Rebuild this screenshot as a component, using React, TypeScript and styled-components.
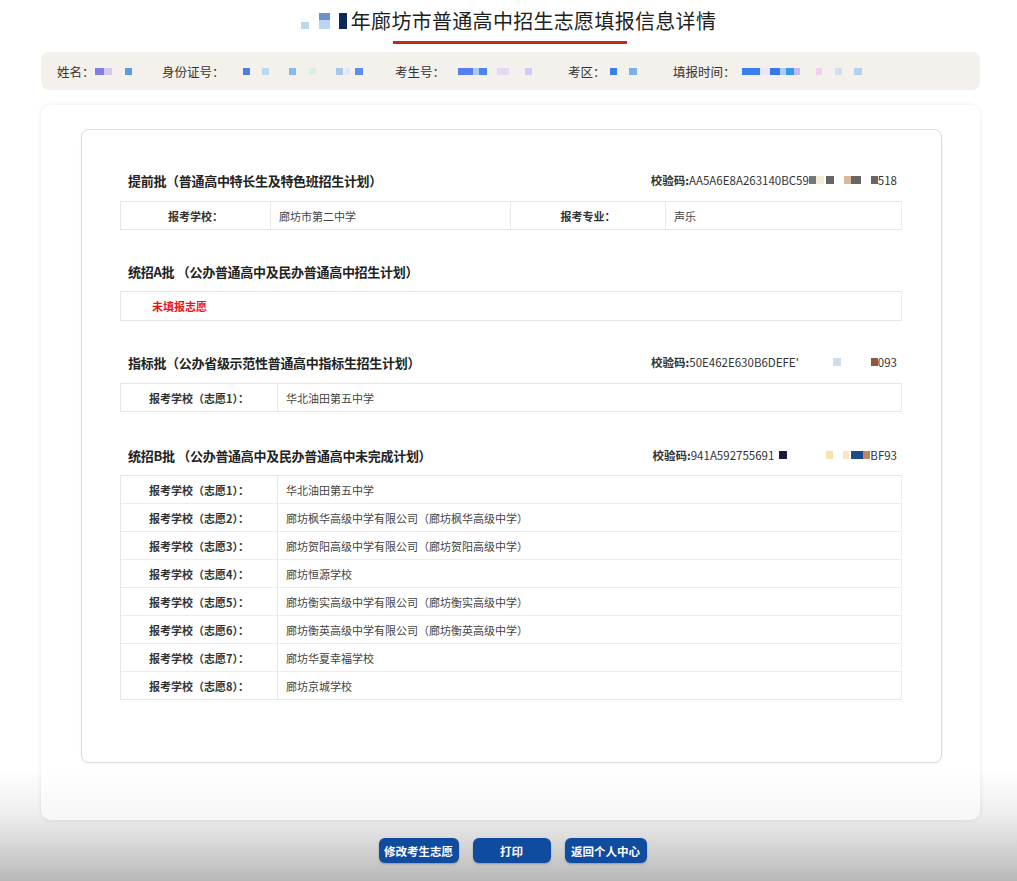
import React from "react";
import styled, { createGlobalStyle } from "styled-components";

const GlobalStyle = createGlobalStyle`
  html, body { margin: 0; padding: 0; }
  body {
    font-family: "Noto Sans CJK SC", "Noto Sans", sans-serif;
    background: linear-gradient(to bottom, #ffffff 0px, #ffffff 770px, #eeeeee 815px, #d2d2d2 850px, #b8b8b8 881px);
    min-height: 881px;
    color: #333;
  }
`;

const Page = styled.div`
  width: 1017px;
  min-height: 881px;
  display: flex;
  flex-direction: column;
`;

const TitleWrap = styled.div`
  display: flex;
  flex-direction: column;
  align-items: center;
  padding-top: 7px;
`;

const Title = styled.h1`
  margin: 0;
  display: flex;
  align-items: center;
  font-size: 20px;
  letter-spacing: 0.3px;
  font-weight: 400;
  color: #1e1e1e;
  line-height: 28px;
`;

const Underline = styled.div`
  width: 234px;
  height: 3px;
  background: #c8281c;
  margin-top: 6px;
  margin-left: 3px;
`;

const Sq = styled.span<{ $c: string; $w?: number; $h?: number; $ml?: number; $top?: string }>`
  display: inline-block;
  width: ${(p) => p.$w ?? 7}px;
  height: ${(p) => p.$h ?? 7}px;
  margin-left: ${(p) => p.$ml ?? 0}px;
  background: ${(p) => (p.$top ? `linear-gradient(to bottom, ${p.$top} 0 45%, ${p.$c} 45% 100%)` : p.$c)};
  flex: none;
`;

const Mask = styled.span<{ $ml?: number; $align?: string }>`
  display: inline-flex;
  align-items: ${(p) => p.$align ?? "center"};
  margin-left: ${(p) => p.$ml ?? 0}px;
`;

const TitleText = styled.span`
  margin-left: 4px;
`;

const InfoBar = styled.div`
  margin: 8px 0 0 41px;
  width: 939px;
  height: 38px;
  box-sizing: border-box;
  background: #f4f0eb;
  border-radius: 8px;
  display: flex;
  align-items: center;
  padding-left: 16px;
  font-size: 12.5px;
  color: #333;
`;

const Field = styled.div<{ $w?: number }>`
  display: flex;
  align-items: center;
  width: ${(p) => (p.$w ? `${p.$w}px` : "auto")};
  flex: none;
`;

const Card = styled.div`
  margin: 15px 0 0 41px;
  width: 939px;
  height: 715px;
  box-sizing: border-box;
  background: linear-gradient(to bottom, #ffffff 0, #ffffff 660px, #f7f7f7 715px);
  border-radius: 10px;
  box-shadow: 0 0 5px rgba(0, 0, 0, 0.1);
  padding: 24px 38px 0 40px;
`;

const Inner = styled.div`
  height: 634px;
  box-sizing: border-box;
  border: 1px solid #dcdcdc;
  border-radius: 8px;
  box-shadow: 0 1px 3px rgba(0, 0, 0, 0.06);
  padding: 39px 39px 0 38px;
  background: #fff;
`;

const Section = styled.section<{ $mt: number }>`
  margin-top: ${(p) => p.$mt}px;
`;

const SecHead = styled.div<{ $mb: number }>`
  height: 22px;
  display: flex;
  align-items: center;
  justify-content: space-between;
  padding: 0 5px 0 8px;
  margin-bottom: ${(p) => p.$mb}px;
`;

const SecTitle = styled.h2`
  margin: 0;
  font-size: 13px;
  font-weight: 700;
  color: #222;
  letter-spacing: -0.3px;
`;

const Code = styled.div`
  display: flex;
  align-items: center;
  font-size: 11.5px;
  color: #333;
  b {
    font-weight: 700;
  }
`;

const Table = styled.div`
  border: 1px solid #e6e6e6;
  border-right-color: #eeeeee;
`;

const Row = styled.div<{ $cols: string; $tall?: boolean }>`
  display: grid;
  grid-template-columns: ${(p) => p.$cols};
  height: 28px;
  box-sizing: border-box;
  border-bottom: 1px solid #ececec;
  &:last-child {
    border-bottom: none;
    height: ${(p) => (p.$tall ? 28 : 27)}px;
  }
`;

const Label = styled.div`
  display: flex;
  align-items: center;
  justify-content: center;
  font-size: 11px;
  font-weight: 700;
  color: #333;
  border-right: 1px solid #e8e8e8;
`;

const Value = styled.div<{ $bordered?: boolean }>`
  display: flex;
  align-items: center;
  padding-left: 8px;
  font-size: 11px;
  color: #444;
  border-right: ${(p) => (p.$bordered ? "1px solid #e8e8e8" : "none")};
`;

const Empty = styled.div`
  display: flex;
  align-items: center;
  padding-left: 31px;
  font-size: 11px;
  font-weight: 700;
  color: #e8121a;
`;

const Buttons = styled.div`
  display: flex;
  justify-content: center;
  gap: 14px;
  margin-top: 18px;
  padding-left: 8px;
`;

const Btn = styled.button<{ $w: number }>`
  width: ${(p) => p.$w}px;
  height: 25px;
  border: none;
  border-radius: 6px;
  background: #0f4c9f;
  color: #fff;
  font-family: "Noto Sans CJK SC", sans-serif;
  font-size: 11.5px;
  font-weight: 700;
  box-shadow: 0 1px 2px rgba(0, 0, 0, 0.25);
  padding: 0;
  cursor: pointer;
`;

const choicesB = [
  "华北油田第五中学",
  "廊坊枫华高级中学有限公司（廊坊枫华高级中学）",
  "廊坊贺阳高级中学有限公司（廊坊贺阳高级中学）",
  "廊坊恒源学校",
  "廊坊衡实高级中学有限公司（廊坊衡实高级中学）",
  "廊坊衡英高级中学有限公司（廊坊衡英高级中学）",
  "廊坊华夏幸福学校",
  "廊坊京城学校",
];

export default function App() {
  return (
    <Page>
      <GlobalStyle />
      <TitleWrap>
        <Title>
          <Mask $align="flex-end">
            <Sq $c="#b9d8ec" $w={8} $h={7} />
            <Sq $c="#b8d6f0" $top="#6c90c8" $w={11} $h={16} $ml={10} />
            <Sq $c="#0b2a58" $w={8} $h={16} $ml={9} />
          </Mask>
          <TitleText>年廊坊市普通高中招生志愿填报信息详情</TitleText>
        </Title>
        <Underline />
      </TitleWrap>

      <InfoBar>
        <Field $w={105}>
          姓名：
          <Mask>
            <Sq $c="#7d80e8" $w={9} />
            <Sq $c="#d6c9f0" $w={8} />
            <Sq $c="#5a9ae8" $ml={13} />
          </Mask>
        </Field>
        <Field $w={233}>
          身份证号：
          <Mask $ml={18}>
            <Sq $c="#4a7fe0" />
            <Sq $c="#bcd8ee" $ml={12} />
            <Sq $c="#8ab8ee" $ml={20} />
            <Sq $c="#d8eee8" $ml={13} />
            <Sq $c="#a8c8ec" $ml={20} />
            <Sq $c="#e8e4f8" $w={5} $ml={2} />
            <Sq $c="#5a90e8" $w={8} $ml={5} />
          </Mask>
        </Field>
        <Field $w={173}>
          考生号：
          <Mask $ml={13}>
            <Sq $c="#5a7ef0" $w={15} />
            <Sq $c="#a8ccf0" $w={6} />
            <Sq $c="#4a84ec" $w={8} />
            <Sq $c="#e2d9f4" $ml={10} />
            <Sq $c="#e8d8f0" $w={5} />
            <Sq $c="#d4c8f4" $ml={16} />
          </Mask>
        </Field>
        <Field $w={105}>
          考区：
          <Mask $ml={4}>
            <Sq $c="#3a7ee8" />
            <Sq $c="#7ab0ec" $w={8} $ml={12} />
          </Mask>
        </Field>
        <Field>
          填报时间：
          <Mask $ml={6}>
            <Sq $c="#3a7ef0" $w={18} />
            <Sq $c="#eae6f6" $w={10} />
            <Sq $c="#3a78e8" $w={10} />
            <Sq $c="#a8d0e8" $w={6} />
            <Sq $c="#3a98e8" $w={8} />
            <Sq $c="#c8b8f4" $w={6} />
            <Sq $c="#f4d0f0" $w={6} $ml={16} />
            <Sq $c="#d0e0f0" $ml={13} />
            <Sq $c="#b4d0ee" $w={8} $ml={12} />
          </Mask>
        </Field>
      </InfoBar>

      <Card>
        <Inner>
          <Section $mt={0}>
            <SecHead $mb={10}>
              <SecTitle>提前批（普通高中特长生及特色班招生计划）</SecTitle>
              <Code>
                <b>校验码:</b>AA5A6E8A263140BC59
                <Mask>
                  <Sq $c="#777" $w={7} $h={8} />
                  <Sq $c="#f4ecd0" $w={8} $h={8} />
                  <Sq $c="#666" $w={8} $h={8} $ml={2} />
                  <Sq $c="#d8b898" $w={7} $h={8} $ml={10} />
                  <Sq $c="#666" $w={10} $h={8} />
                  <Sq $c="#666" $w={7} $h={8} $ml={10} />
                </Mask>
                518
              </Code>
            </SecHead>
            <Table>
              <Row $cols="150px 240px 155px 1fr">
                <Label>报考学校：</Label>
                <Value $bordered>廊坊市第二中学</Value>
                <Label>报考专业：</Label>
                <Value>声乐</Value>
              </Row>
            </Table>
          </Section>

          <Section $mt={30}>
            <SecHead $mb={9}>
              <SecTitle>统招A批 （公办普通高中及民办普通高中招生计划）</SecTitle>
            </SecHead>
            <Table>
              <Row $cols="1fr" $tall>
                <Empty>未填报志愿</Empty>
              </Row>
            </Table>
          </Section>

          <Section $mt={30}>
            <SecHead $mb={10}>
              <SecTitle>指标批（公办省级示范性普通高中指标生招生计划）</SecTitle>
              <Code>
                <b>校验码:</b>50E462E630B6DEFE'
                <Mask>
                  <Sq $c="#d0dcec" $w={8} $h={8} $ml={34} />
                  <Sq $c="#8a5a40" $w={7} $h={8} $ml={30} />
                </Mask>
                093
              </Code>
            </SecHead>
            <Table>
              <Row $cols="157px 1fr">
                <Label>报考学校（志愿1）：</Label>
                <Value>华北油田第五中学</Value>
              </Row>
            </Table>
          </Section>

          <Section $mt={32}>
            <SecHead $mb={9}>
              <SecTitle>统招B批 （公办普通高中及民办普通高中未完成计划）</SecTitle>
              <Code>
                <b>校验码:</b>941A592755691
                <Mask>
                  <Sq $c="#1a1a40" $w={8} $h={8} $ml={5} />
                  <Sq $c="#f8e0b0" $w={7} $h={8} $ml={39} />
                  <Sq $c="#f8e4c0" $w={6} $h={8} $ml={10} />
                  <Sq $c="#1e4a8a" $w={12} $h={8} $ml={2} />
                  <Sq $c="#c08860" $w={7} $h={8} />
                </Mask>
                BF93
              </Code>
            </SecHead>
            <Table>
              {choicesB.map((s, i) => (
                <Row key={i} $cols="157px 1fr">
                  <Label>报考学校（志愿{i + 1}）：</Label>
                  <Value>{s}</Value>
                </Row>
              ))}
            </Table>
          </Section>
        </Inner>
      </Card>

      <Buttons>
        <Btn $w={80}>修改考生志愿</Btn>
        <Btn $w={78}>打印</Btn>
        <Btn $w={82}>返回个人中心</Btn>
      </Buttons>
    </Page>
  );
}
